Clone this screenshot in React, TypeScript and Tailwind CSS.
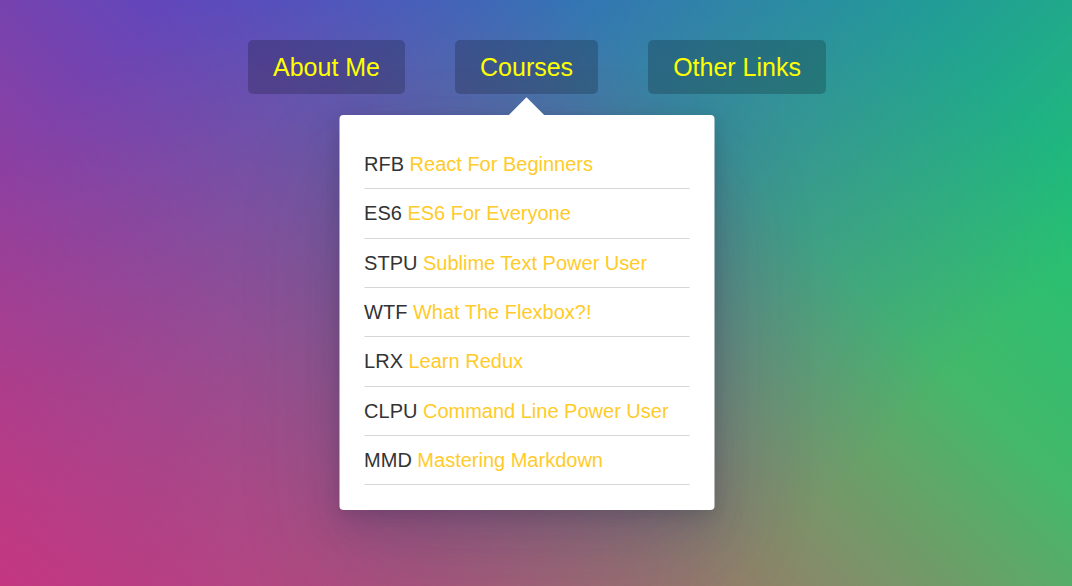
import React from "react";

const courses = [
  ["RFB", "React For Beginners"],
  ["ES6", "ES6 For Everyone"],
  ["STPU", "Sublime Text Power User"],
  ["WTF", "What The Flexbox?!"],
  ["LRX", "Learn Redux"],
  ["CLPU", "Command Line Power User"],
  ["MMD", "Mastering Markdown"],
];

function CoursesDropdown() {
  return (
    <div className="absolute left-1/2 top-full mt-[21px] w-[375px] -translate-x-1/2 rounded-[4px] bg-white p-[25px] shadow-[0_50px_100px_rgba(50,50,93,0.2),0_15px_35px_rgba(50,50,93,0.2),0_5px_15px_rgba(0,0,0,0.1)]">
      <span className="absolute left-1/2 top-0 h-[25px] w-[25px] -translate-x-1/2 -translate-y-1/2 rotate-45 bg-white" />
      <ul className="relative">
        {courses.map(([code, name]) => (
          <li
            key={code}
            className="flex h-[49.33px] items-center border-b border-[#d6d6d6] pt-[1px] text-[20px] leading-[23px]"
          >
            <span className="text-[#333]">{code}</span>
            <a href="#" className="ml-[5.5px] text-[#ffcb2a]">
              {name}
            </a>
          </li>
        ))}
      </ul>
    </div>
  );
}

export default function App() {
  const links = ["About Me", "Courses", "Other Links"];
  return (
    <div className="h-screen w-full overflow-hidden bg-[#a4a050] bg-[linear-gradient(45deg,#c43680_0%,rgba(196,54,128,0)_70%),linear-gradient(135deg,#2a50dc_10%,rgba(42,80,220,0)_80%),linear-gradient(225deg,#1ec274_10%,rgba(30,194,116,0)_80%)] font-['Liberation_Sans',Arial,sans-serif]">
      <nav className="pt-10">
        <ul className="flex justify-center gap-[50px] pl-[2px]">
          {links.map((link) => (
            <li key={link} className="relative">
              <a
                href="#"
                className="flex h-[54px] items-center rounded-[5px] bg-black/20 px-[25px] pt-[1px] text-[25px] text-[#ffff00]"
              >
                {link}
              </a>
              {link === "Courses" && <CoursesDropdown />}
            </li>
          ))}
        </ul>
      </nav>
    </div>
  );
}
